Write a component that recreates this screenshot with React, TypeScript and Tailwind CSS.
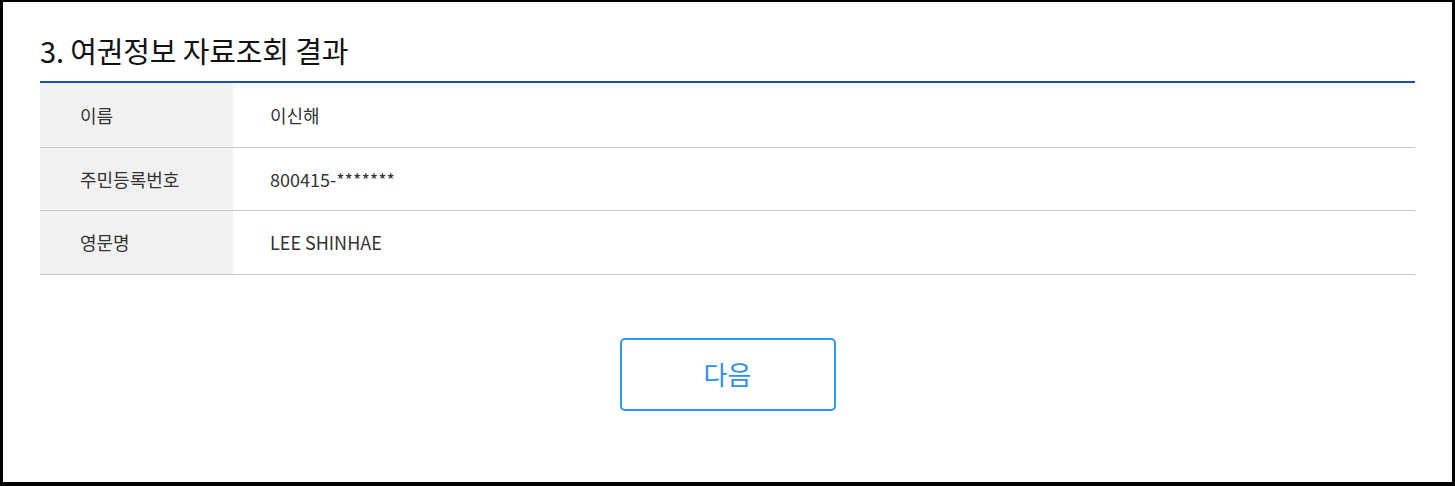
import React from "react";

const font = { fontFamily: '"Noto Sans CJK KR", "Noto Sans", sans-serif' };

const rows: { label: string; value: string; h: string }[] = [
  { label: "이름", value: "이신해", h: "h-[65px]" },
  { label: "주민등록번호", value: "800415-*******", h: "h-[63px]" },
  { label: "영문명", value: "LEE SHINHAE", h: "h-[64px]" },
];

export default function App() {
  return (
    <div
      className="w-[1455px] h-[486px] bg-white border-black border-l-[3px] border-t-[2px] border-r-[3px] border-b-[4px] px-[37px] pt-[28px] box-border"
      style={font}
    >
      <h2 className="text-[29px] leading-[40px] text-[#111] font-normal tracking-[-0.15px]">
        3. 여권정보 자료조회 결과
      </h2>
      <div className="mt-[11px] border-t-2 border-[#1450b4]">
        {rows.map((r) => (
          <div
            key={r.label}
            className={`flex ${r.h} border-b border-[#c8c8c8] text-[18px] text-[#333]`}
          >
            <div className="w-[193px] bg-[#f1f1f1] flex items-center pl-[40px]">
              {r.label}
            </div>
            <div className="flex-1 flex items-center pl-[37px]">{r.value}</div>
          </div>
        ))}
      </div>
      <div className="flex justify-center mt-[63px]">
        <button className="w-[216px] h-[73px] border-2 border-[#2f96f5] rounded-[5px] bg-white text-[26px] text-[#2f8ef0] flex items-center justify-center pb-[3px]">
          다음
        </button>
      </div>
    </div>
  );
}
